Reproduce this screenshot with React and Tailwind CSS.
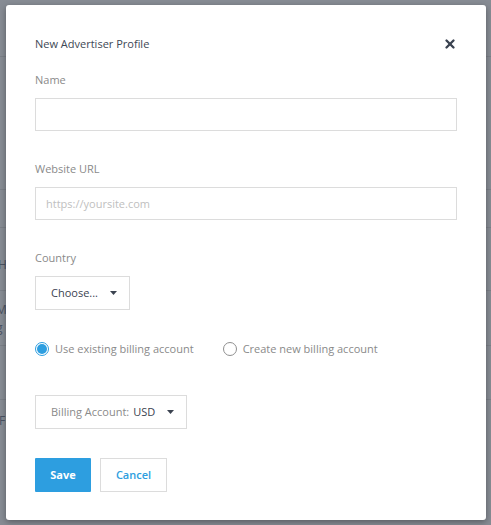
import { X } from 'lucide-react'

function Caret() {
  return (
    <svg width="7" height="4" viewBox="0 0 7 4" className="ml-[12px]">
      <path d="M0 0h7L3.5 4z" fill="#3b4350" />
    </svg>
  )
}

function Radio({ checked, label }) {
  return (
    <label className="flex items-center gap-[6px]">
      {checked ? (
        <span className="w-[14px] h-[14px] rounded-full border border-[#2d9ee0] flex items-center justify-center">
          <span className="w-[10px] h-[10px] rounded-full bg-[#2d9ee0]" />
        </span>
      ) : (
        <span className="w-[14px] h-[14px] rounded-full border border-[#8f8f8f]" />
      )}
      <span className="text-[#8a8a8a]">{label}</span>
    </label>
  )
}

export default function App() {
  return (
    <div className="relative w-[491px] h-[525px] overflow-hidden bg-[#878c94]" style={{ fontFamily: '"Open Sans", sans-serif' }}>
      {/* page behind the overlay */}
      <div className="flex flex-col text-[#4b5362]">
        <div className="h-[57px] border-b border-[#7b8088]" />
        <div className="h-[133px] border-b border-[#7b8088] pt-[30px] text-[22px] leading-[28px] -ml-[8px]">t</div>
        <div className="h-[38px] border-b border-[#7b8088]" />
        <div className="h-[63px] border-b border-[#7b8088] pt-[28px] text-[12px] -ml-[2px]">H</div>
        <div className="h-[55px] border-b border-[#7b8088] pt-[10px] text-[12px] leading-[18px] -ml-[4px]">
          <div>M</div>
          <div>g</div>
        </div>
        <div className="h-[54px] border-b border-[#7b8088]" />
        <div className="h-[125px] pt-[12px] text-[12px] -ml-[1px]">FE</div>
      </div>

      {/* modal */}
      <div className="absolute left-[6px] top-[5px] w-[480px] h-[515px] bg-white rounded-[3px] shadow-[0_2px_6px_rgba(0,0,0,0.35)] px-[29px] pt-[31px] text-[11px]">
        <div className="flex items-center justify-between h-[16px]">
          <h1 className="text-[#404855]">New Advertiser Profile</h1>
          <X size={14} strokeWidth={4} className="text-[#3a4250]" />
        </div>

        <div className="mt-[20px] h-[16px] leading-[16px] text-[#8a8a8a]">Name</div>
        <input className="mt-[10px] block w-full h-[33px] border border-[#dcdcdc] outline-none" />

        <div className="mt-[30px] h-[16px] leading-[16px] text-[#8a8a8a]">Website URL</div>
        <input
          placeholder="https://yoursite.com"
          className="mt-[10px] block w-full h-[33px] border border-[#dcdcdc] px-[10px] outline-none placeholder:text-[#c0c0c0]"
        />

        <div className="mt-[30px] h-[16px] leading-[16px] text-[#8a8a8a]">Country</div>
        <button className="mt-[10px] flex items-center h-[34px] w-[95px] border border-[#dcdcdc] pl-[15px] text-[#3b4350]">
          Choose...
          <Caret />
        </button>

        <div className="mt-[31px] flex items-center gap-[29px] h-[16px]">
          <Radio checked label="Use existing billing account" />
          <Radio label="Create new billing account" />
        </div>

        <button className="mt-[38px] flex items-center h-[34px] w-[152px] border border-[#dcdcdc] pl-[15px]">
          <span className="text-[#8a8a8a]">Billing Account:</span>
          <span className="ml-[4px] text-[#3b4350]">USD</span>
          <Caret />
        </button>

        <div className="mt-[29px] flex gap-[9px]">
          <button className="h-[34px] w-[56px] bg-[#2d9ee0] text-white font-bold rounded-[1px]">Save</button>
          <button className="h-[34px] w-[67px] border border-[#dcdcdc] text-[#2d9ee0] font-semibold">Cancel</button>
        </div>
      </div>
    </div>
  )
}
